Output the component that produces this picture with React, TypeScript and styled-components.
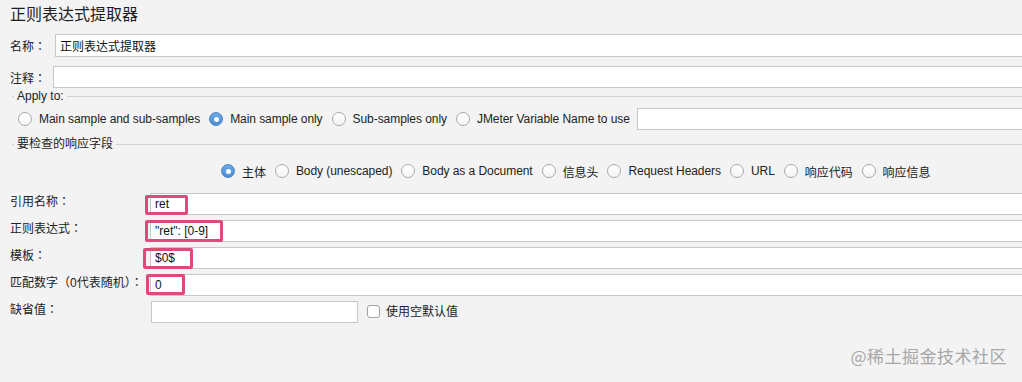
import styled, { createGlobalStyle } from "styled-components";

const GlobalStyle = createGlobalStyle`
  html, body {
    margin: 0;
    padding: 0;
    background: #f3f3f3;
    overflow: hidden;
  }
  body {
    font-family: "Liberation Sans", "Noto Sans CJK SC", sans-serif;
    font-size: 12px;
    color: #222;
  }
`;

const applyOptions = [
  { label: "Main sample and sub-samples", checked: false },
  { label: "Main sample only", checked: true },
  { label: "Sub-samples only", checked: false },
  { label: "JMeter Variable Name to use", checked: false },
];

const fieldOptions = [
  { label: "主体", checked: true },
  { label: "Body (unescaped)", checked: false },
  { label: "Body as a Document", checked: false },
  { label: "信息头", checked: false },
  { label: "Request Headers", checked: false },
  { label: "URL", checked: false },
  { label: "响应代码", checked: false },
  { label: "响应信息", checked: false },
];

// pink annotation boxes, offsets relative to the input
const fields = [
  { label: "引用名称：", value: "ret", mark: { left: -5, top: 2, w: 43, h: 20 } },
  { label: "正则表达式：", value: "\"ret\": [0-9]", mark: { left: -5, top: 0, w: 78, h: 22 } },
  { label: "模板：", value: "$0$", mark: { left: -7, top: 1, w: 50, h: 21 } },
  { label: "匹配数字（0代表随机）：", value: "0", mark: { left: -4, top: 0, w: 39, h: 21 } },
];

// full-width punctuation is drawn centred, as the mac font does
const LabelText = ({ text }: { text: string }) => (
  <>
    {text.split(/([：（）])/).map((part, i) =>
      /^[：（）]$/.test(part) ? (
        <StyledPunct key={i}>{part}</StyledPunct>
      ) : (
        part
      ),
    )}
  </>
);

export default function App() {
  return (
    <StyledFrame>
      <GlobalStyle />
      <StyledPanel>
        <StyledTitle>正则表达式提取器</StyledTitle>

        <StyledTopRow $top={9} $height={23}>
          <StyledLabel $width={45}>
            <LabelText text="名称：" />
          </StyledLabel>
          <StyledInput readOnly value={"正则表达式提取器"} />
        </StyledTopRow>
        <StyledTopRow $top={9} $height={22}>
          <StyledLabel $width={43}>
            <LabelText text="注释：" />
          </StyledLabel>
          <StyledInput readOnly value={""} />
        </StyledTopRow>

        <StyledSectionTitle $top={1}>
          <span>Apply to:</span>
        </StyledSectionTitle>
        <StyledRadioRow $top={5} $left={18}>
          {applyOptions.map((o) => (
            <StyledOption key={o.label}>
              <StyledRadio $checked={o.checked} />
              <span>{o.label}</span>
            </StyledOption>
          ))}
          <StyledVarInput readOnly value={""} />
        </StyledRadioRow>

        <StyledSectionTitle $top={7}>
          <span>要检查的响应字段</span>
        </StyledSectionTitle>
        <StyledRadioRow $top={9} $left={221}>
          {fieldOptions.map((o) => (
            <StyledOption key={o.label}>
              <StyledRadio $checked={o.checked} />
              <span>{o.label}</span>
            </StyledOption>
          ))}
        </StyledRadioRow>

        <StyledFieldList>
          {fields.map((f) => (
            <StyledFieldRow key={f.label}>
              <StyledFieldLabel>
                <LabelText text={f.label} />
              </StyledFieldLabel>
              <StyledInputWrap>
                <StyledInput readOnly value={f.value} />
                <StyledMark
                  $left={f.mark.left}
                  $top={f.mark.top}
                  $w={f.mark.w}
                  $h={f.mark.h}
                />
              </StyledInputWrap>
            </StyledFieldRow>
          ))}
          <StyledFieldRow>
            <StyledFieldLabel $width={141}>
              <LabelText text="缺省值：" />
            </StyledFieldLabel>
            <StyledShortInput readOnly value={""} />
            <StyledCheckbox />
            <StyledCheckLabel>使用空默认值</StyledCheckLabel>
          </StyledFieldRow>
        </StyledFieldList>
      </StyledPanel>
      <StyledWatermark>@稀土掘金技术社区</StyledWatermark>
    </StyledFrame>
  );
}

const StyledFrame = styled.div`
  position: relative;
  width: 100vw;
  height: 100vh;
  overflow: hidden;
`;

const StyledPanel = styled.div`
  display: flex;
  flex-direction: column;
  width: calc(100% + 12px);
`;

const StyledTitle = styled.div`
  padding: 5px 0 0 10px;
  font-size: 16px;
  line-height: 20px;
  color: #1e1e1e;
`;

const StyledTopRow = styled.div<{ $top: number; $height: number }>`
  display: flex;
  align-items: center;
  height: ${(p) => p.$height}px;
  margin-top: ${(p) => p.$top}px;
  padding-left: 10px;
`;

const StyledLabel = styled.span<{ $width: number }>`
  flex-shrink: 0;
  width: ${(p) => p.$width}px;
  white-space: nowrap;
`;

const StyledPunct = styled.span`
  font-family: "Noto Sans CJK TC", "Noto Sans CJK SC", sans-serif;
`;

const StyledInput = styled.input`
  flex: 1;
  min-width: 0;
  width: 100%;
  height: 100%;
  box-sizing: border-box;
  margin: 0;
  padding: 0 4px;
  border: 1px solid #c8c8c8;
  background: #fff;
  font: inherit;
  color: #111;
  outline: none;
`;

const StyledSectionTitle = styled.div<{ $top: number }>`
  display: flex;
  align-items: center;
  gap: 3px;
  height: 14px;
  margin-top: ${(p) => p.$top}px;
  margin-left: 12px;
  line-height: 14px;
  color: #222;

  &::before {
    content: "";
    width: 2px;
    height: 1px;
    background: #d2d2d2;
  }

  &::after {
    content: "";
    flex: 1;
    height: 1px;
    background: #d2d2d2;
  }
`;

const StyledRadioRow = styled.div<{ $top: number; $left: number }>`
  display: flex;
  align-items: center;
  gap: 9px;
  height: 22px;
  margin-top: ${(p) => p.$top}px;
  padding-left: ${(p) => p.$left}px;
  letter-spacing: -0.06px;
`;

const StyledOption = styled.label`
  display: flex;
  align-items: center;
  gap: 7px;
  white-space: nowrap;
`;

const StyledRadio = styled.span<{ $checked: boolean }>`
  position: relative;
  flex-shrink: 0;
  width: 14px;
  height: 14px;
  box-sizing: border-box;
  border-radius: 50%;
  border: 1px solid ${(p) => (p.$checked ? "#4a86c9" : "#a9a9a9")};
  background: ${(p) =>
    p.$checked
      ? "linear-gradient(#6aa9e6, #4c8cd3)"
      : "linear-gradient(#ffffff, #f4f4f4)"};

  &::after {
    content: "";
    display: ${(p) => (p.$checked ? "block" : "none")};
    position: absolute;
    left: 50%;
    top: 50%;
    width: 5px;
    height: 5px;
    margin: -2.5px 0 0 -2.5px;
    border-radius: 50%;
    background: #fff;
  }
`;

const StyledVarInput = styled(StyledInput)`
  margin-left: -2px;
`;

const StyledFieldList = styled.div`
  display: flex;
  flex-direction: column;
  gap: 5px;
  margin-top: 11px;
  padding-left: 10px;
`;

const StyledFieldRow = styled.div`
  display: flex;
  align-items: flex-start;
  height: 22px;
`;

const StyledFieldLabel = styled.span<{ $width?: number }>`
  flex-shrink: 0;
  width: ${(p) => p.$width ?? 140}px;
  line-height: 14px;
  padding-top: 1px;
  white-space: nowrap;
`;

const StyledInputWrap = styled.div`
  position: relative;
  display: flex;
  flex: 1;
  height: 100%;
`;

const StyledMark = styled.span<{ $left: number; $top: number; $w: number; $h: number }>`
  position: absolute;
  left: ${(p) => p.$left}px;
  top: ${(p) => p.$top}px;
  width: ${(p) => p.$w}px;
  height: ${(p) => p.$h}px;
  box-sizing: border-box;
  border: 3px solid #df4a7e;
  border-radius: 2px;
  pointer-events: none;
`;

const StyledShortInput = styled(StyledInput)`
  flex: none;
  width: 207px;
`;

const StyledCheckbox = styled.span`
  flex-shrink: 0;
  width: 13px;
  height: 13px;
  margin: 4px 0 0 9px;
  box-sizing: border-box;
  border: 1px solid #a2a2a2;
  border-radius: 3px;
  background: #fff;
`;

const StyledCheckLabel = styled.span`
  margin-left: 6px;
  line-height: 14px;
  padding-top: 4px;
  white-space: nowrap;
`;

const StyledWatermark = styled.div`
  position: absolute;
  right: 15px;
  top: 344px;
  font-family: "Noto Sans CJK SC", sans-serif;
  font-size: 17px;
  line-height: 24px;
  color: #a8a8a8;
  letter-spacing: 0.5px;
`;
